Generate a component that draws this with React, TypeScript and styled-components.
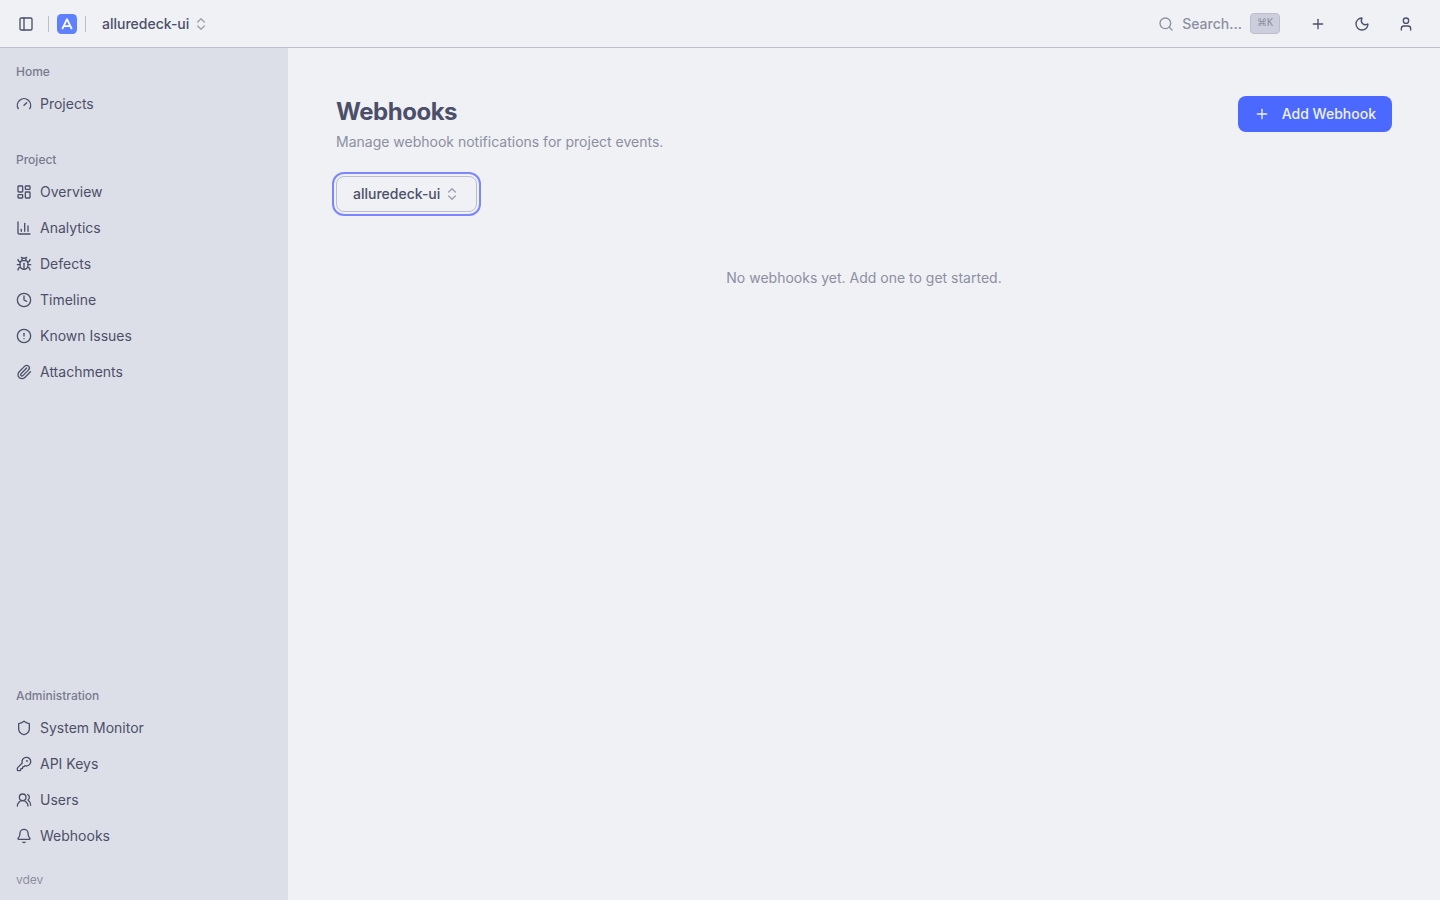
import React from 'react';
import styled, { createGlobalStyle, css } from 'styled-components';
import {
  Bell, Bug, ChartColumn, ChevronsUpDown, CircleAlert, Clock, Gauge, KeyRound,
  LayoutDashboard, Moon, PanelLeft, Paperclip, Plus, Search, Shield, User, UsersRound,
} from 'lucide-react';
import type { LucideIcon } from 'lucide-react';

const color = {
  base: '#eff1f5',
  sidebar: '#dddfe8',
  text: '#4c4f69',
  muted: '#8c8fa1',
  border: '#bcbecf',
  key: '#cccedb',
  primary: '#4c69ff',
  ring: '#7c87ff',
};

const GlobalStyle = createGlobalStyle`
  *, *::before, *::after { box-sizing: border-box; }
  body {
    margin: 0;
    background: ${color.base};
    color: ${color.text};
    font-family: Inter, "Liberation Sans", sans-serif;
    font-size: 14px;
    line-height: 20px;
  }
  button { font: inherit; color: inherit; cursor: pointer; }
  svg { flex-shrink: 0; }
`;

const Shell = styled.div`
  display: flex;
  flex-direction: column;
  min-height: 100vh;
`;

const TopBar = styled.header`
  display: flex;
  align-items: center;
  justify-content: space-between;
  height: 48px;
  padding: 0 16px 0 8px;
  border-bottom: 1px solid ${color.border};
`;

const BarGroup = styled.div`
  display: flex;
  align-items: center;
  gap: 8px;
`;

const IconButton = styled.button`
  display: flex;
  align-items: center;
  justify-content: center;
  width: 36px;
  height: 36px;
  padding: 0;
  border: 0;
  border-radius: 8px;
  background: transparent;
`;

const Divider = styled.span`
  width: 1px;
  height: 16px;
  background: ${color.border};
`;

const Brand = styled.a`
  display: flex;
`;

const BarTools = styled(BarGroup)`
  margin-left: -4px;
`;

const SearchButton = styled.button`
  display: flex;
  align-items: center;
  gap: 8px;
  height: 36px;
  padding: 0 12px;
  border: 0;
  background: transparent;
  color: ${color.muted};
  font-weight: 500;
`;

const Key = styled.kbd`
  height: 21px;
  padding: 0 6px;
  border: 1px solid ${color.border};
  border-radius: 4px;
  background: ${color.key};
  font-family: "DejaVu Sans Mono", monospace;
  font-size: 10px;
  line-height: 18px;
`;

const Modifier = styled.span`
  font-family: "DejaVu Sans", sans-serif;
`;

const ProjectButton = styled.button<{ $outlined?: boolean }>`
  display: flex;
  align-items: center;
  gap: 4px;
  height: 32px;
  padding: 0 8px;
  border: 0;
  border-radius: 8px;
  background: transparent;
  font-weight: 500;

  svg { opacity: 0.5; }

  ${({ $outlined }) => $outlined && css`
    height: 36px;
    padding: 0 16px;
    border: 1px solid ${color.border};
    outline: 2px solid ${color.ring};
    outline-offset: 2px;
  `}
`;

const Body = styled.div`
  display: flex;
  flex: 1;
`;

const Sidebar = styled.aside`
  display: flex;
  flex-direction: column;
  gap: 24px;
  flex: 0 0 288px;
  padding: 8px 8px 12px;
  background: ${color.sidebar};
`;

const NavGroup = styled.nav<{ $last?: boolean }>`
  margin-top: ${({ $last }) => ($last ? 'auto' : '0')};
`;

const NavTitle = styled.h2`
  margin: 0;
  padding: 0 8px;
  color: ${color.text};
  font-size: 12px;
  font-weight: 500;
  line-height: 32px;
  opacity: 0.7;
`;

const NavList = styled.ul`
  display: flex;
  flex-direction: column;
  gap: 4px;
  margin: 0;
  padding: 0;
  list-style: none;
`;

const NavLink = styled.a`
  display: flex;
  align-items: center;
  gap: 8px;
  height: 32px;
  padding: 0 8px;
  border-radius: 8px;
  color: ${color.text};
  text-decoration: none;
`;

const Version = styled.p`
  margin: -4px 0 0;
  padding: 0 8px;
  color: ${color.muted};
  font-size: 12px;
  line-height: 16px;
`;

const Main = styled.main`
  display: flex;
  flex: 1;
  flex-direction: column;
  align-items: stretch;
  gap: 24px;
  min-width: 0;
  padding: 48px;
`;

const PageHeader = styled.div`
  display: flex;
  align-items: flex-start;
  justify-content: space-between;
`;

const Title = styled.h1`
  margin: 0 0 4px;
  font-size: 24px;
  font-weight: 700;
  line-height: 32px;
  letter-spacing: -0.02em;
`;

const Muted = styled.p`
  margin: 0;
  color: ${color.muted};
`;

const PrimaryButton = styled.button`
  display: flex;
  align-items: center;
  gap: 12px;
  height: 36px;
  padding: 0 16px;
  border: 0;
  border-radius: 8px;
  background: ${color.primary};
  color: ${color.base};
  font-weight: 500;
`;

const Filters = styled.div`
  display: flex;
`;

const Empty = styled(Muted)`
  padding: 32px 0;
  text-align: center;
`;

type Item = { label: string; icon: LucideIcon };

const homeItems: Item[] = [{ label: 'Projects', icon: Gauge }];

const projectItems: Item[] = [
  { label: 'Overview', icon: LayoutDashboard },
  { label: 'Analytics', icon: ChartColumn },
  { label: 'Defects', icon: Bug },
  { label: 'Timeline', icon: Clock },
  { label: 'Known Issues', icon: CircleAlert },
  { label: 'Attachments', icon: Paperclip },
];

const adminItems: Item[] = [
  { label: 'System Monitor', icon: Shield },
  { label: 'API Keys', icon: KeyRound },
  { label: 'Users', icon: UsersRound },
  { label: 'Webhooks', icon: Bell },
];

function NavSection({ title, items, last }: { title: string; items: Item[]; last?: boolean }) {
  return (
    <NavGroup $last={last} aria-label={title}>
      <NavTitle>{title}</NavTitle>
      <NavList>
        {items.map(({ label, icon: Icon }) => (
          <li key={label}>
            <NavLink href="#">
              <Icon size={16} />
              <span>{label}</span>
            </NavLink>
          </li>
        ))}
      </NavList>
    </NavGroup>
  );
}

function Logo() {
  return (
    <svg width="20" height="20" viewBox="0 0 20 20" fill="none">
      <rect width="20" height="20" rx="4.5" fill="#5f80ff" />
      <path d="M5.2 15.2 10 5.2l4.8 10M7.2 12.2h5.6" stroke="#fff" strokeWidth="1.8" strokeLinejoin="round" />
    </svg>
  );
}

export default function App() {
  return (
    <Shell>
      <GlobalStyle />
      <TopBar>
        <BarGroup>
          <IconButton aria-label="Toggle sidebar"><PanelLeft size={16} /></IconButton>
          <BarTools>
            <Divider />
            <Brand href="#" aria-label="Home"><Logo /></Brand>
            <Divider />
            <ProjectButton aria-haspopup="listbox">
              alluredeck-ui
              <ChevronsUpDown size={16} />
            </ProjectButton>
          </BarTools>
        </BarGroup>
        <BarGroup>
          <SearchButton>
            <Search size={16} />
            Search...
            <Key><Modifier>⌘</Modifier>K</Key>
          </SearchButton>
          <IconButton aria-label="Add"><Plus size={16} /></IconButton>
          <IconButton aria-label="Toggle theme"><Moon size={16} /></IconButton>
          <IconButton aria-label="Account"><User size={16} /></IconButton>
        </BarGroup>
      </TopBar>
      <Body>
        <Sidebar>
          <NavSection title="Home" items={homeItems} />
          <NavSection title="Project" items={projectItems} />
          <NavSection title="Administration" items={adminItems} last />
          <Version>vdev</Version>
        </Sidebar>
        <Main>
          <PageHeader>
            <div>
              <Title>Webhooks</Title>
              <Muted>Manage webhook notifications for project events.</Muted>
            </div>
            <PrimaryButton>
              <Plus size={16} />
              Add Webhook
            </PrimaryButton>
          </PageHeader>
          <Filters>
            <ProjectButton $outlined aria-haspopup="listbox">
              alluredeck-ui
              <ChevronsUpDown size={16} />
            </ProjectButton>
          </Filters>
          <Empty>No webhooks yet. Add one to get started.</Empty>
        </Main>
      </Body>
    </Shell>
  );
}
